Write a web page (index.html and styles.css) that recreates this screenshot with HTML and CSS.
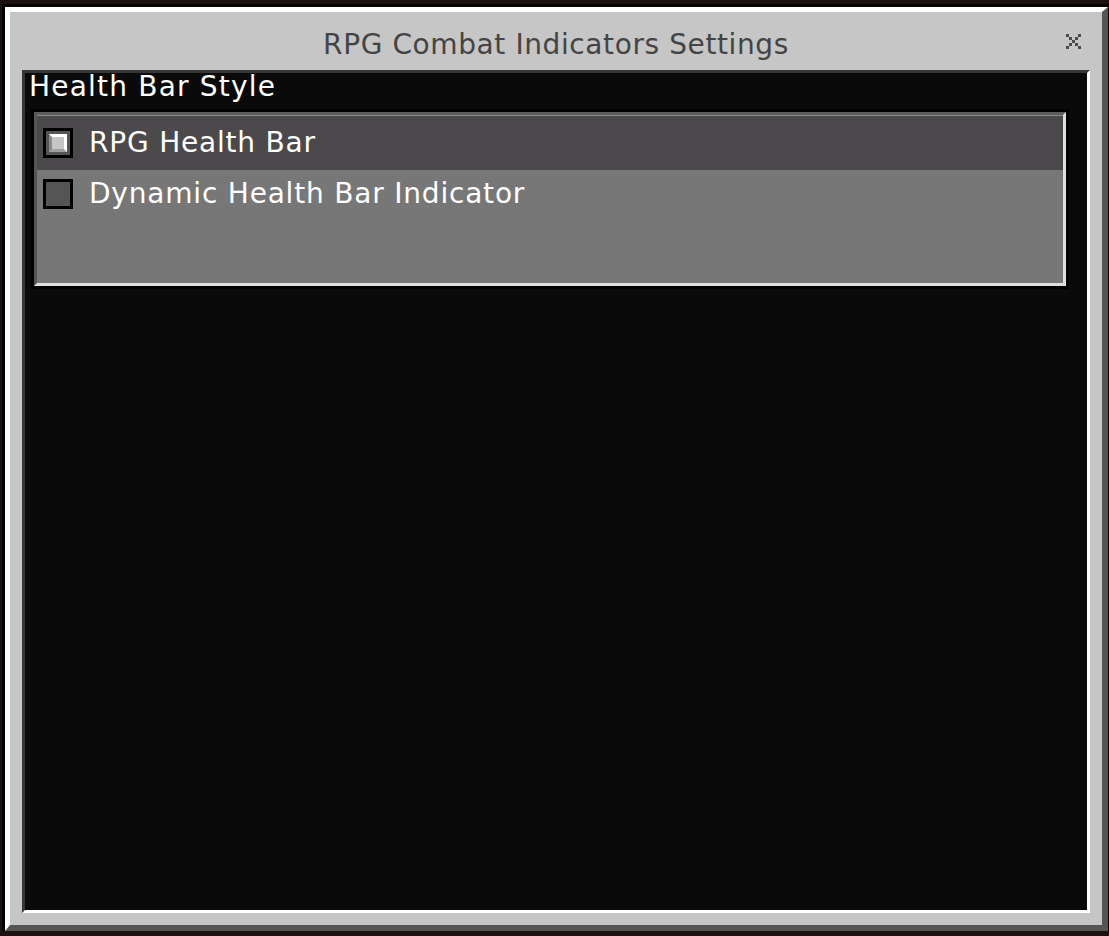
FILE: index.html
```html
<!DOCTYPE html>
<html lang="en">

<head>
  <meta charset="UTF-8" />
  <meta name="viewport" content="width=device-width, initial-scale=1.0" />
  <title>RPG Combat Indicators Settings</title>
  <link rel="stylesheet" href="styles.css">
</head>

<body>
  <div class="window">
    <div class="titlebar">
      <span></span>
      <h1 class="title">RPG Combat Indicators Settings</h1>
      <button class="close" type="button">
        <svg width="15" height="15" viewBox="0 0 15 15">
          <rect x="0" y="0" width="3" height="3" />
          <rect x="12" y="0" width="3" height="3" />
          <rect x="3" y="3" width="3" height="3" />
          <rect x="9" y="3" width="3" height="3" />
          <rect x="6" y="6" width="3" height="3" />
          <rect x="3" y="9" width="3" height="3" />
          <rect x="9" y="9" width="3" height="3" />
          <rect x="0" y="12" width="3" height="3" />
          <rect x="12" y="12" width="3" height="3" />
        </svg>
      </button>
    </div>
    <div class="panel">
      <div class="section-label">Health Bar Style</div>
      <div class="list">
        <div class="list-inner">
          <div class="option selected">
            <span class="check"><span class="mark"></span></span>
            <span class="option-text">RPG Health Bar</span>
          </div>
          <div class="option">
            <span class="check"></span>
            <span class="option-text">Dynamic Health Bar Indicator</span>
          </div>
        </div>
      </div>
    </div>
  </div>
</body>

</html>
```

FILE: styles.css
```css
* {
  padding: 0;
  margin: 0;
  box-sizing: border-box;
}

body {
  background: #1c1110;
  font-family: "DejaVu Sans", "Liberation Sans", sans-serif;
  overflow: hidden;
}

.window {
  display: flex;
  flex-direction: column;
  width: 1103px;
  height: 924px;
  margin: 7px 0 0 5px;
  background: #c6c6c6;
  border-top: 5px solid #fff;
  border-left: 5px solid #fff;
  border-right: 6px solid #555;
  border-bottom: 6px solid #555;
  outline: 3px solid #000;
}

.titlebar {
  display: grid;
  grid-template-columns: 1fr auto 1fr;
  height: 58px;
  padding-top: 17px;
}

.title {
  font-size: 28px;
  line-height: 32px;
  font-weight: normal;
  letter-spacing: 0.6px;
  color: #444;
}

.close {
  justify-self: end;
  align-self: start;
  width: 15px;
  height: 15px;
  margin: 5px 21px 0 0;
  background: none;
  border: 0;
  fill: #4c4c4c;
}

.close svg {
  display: block;
}

.panel {
  flex: 1;
  margin: 0 12px 12px;
  background: #0a0a0a;
  border-top: 3px solid #373737;
  border-left: 3px solid #373737;
  border-right: 3px solid #fff;
  border-bottom: 3px solid #fff;
}

.section-label {
  height: 28px;
  margin-bottom: 8px;
  padding-left: 4px;
  font-size: 28px;
  line-height: 28px;
  letter-spacing: 1.2px;
  color: #fff;
}

.list {
  height: 180px;
  margin: 0 18px 0 6px;
  border: 3px solid #000;
}

.list-inner {
  height: 100%;
  background: #777;
  border-top: 3px solid #5c5c5c;
  border-left: 3px solid #555;
  border-right: 3px solid #e0e0e0;
  border-bottom: 3px solid #e0e0e0;
}

.option {
  display: flex;
  align-items: center;
  gap: 16px;
  height: 48px;
  padding-left: 6px;
}

.option.selected {
  height: 55px;
  background: #4b494c;
  border-top: 1px solid #8b8b8b;
}

.check {
  width: 30px;
  height: 30px;
  padding: 3px;
  background: #555;
  border: 3px solid #000;
  flex-shrink: 0;
}

.mark {
  display: block;
  width: 18px;
  height: 18px;
  background: #c6c6c6;
  border-top: 3px solid #fff;
  border-right: 3px solid #fff;
  border-left: 3px solid #8b8b8b;
  border-bottom: 3px solid #a0a0a0;
}

.option-text {
  font-size: 28px;
  line-height: 32px;
  letter-spacing: 0.8px;
  color: #fff;
}
```
